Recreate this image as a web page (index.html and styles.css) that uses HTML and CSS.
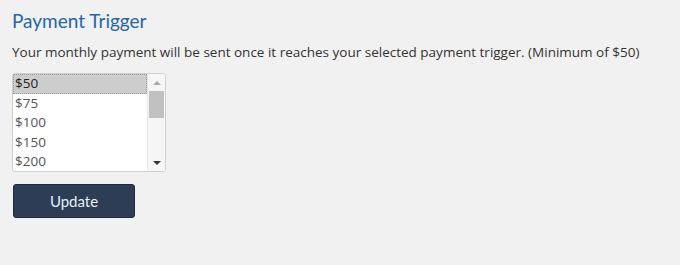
FILE: index.html
```html
<!DOCTYPE html>
<html>
<head>
<meta charset="utf-8">
<link rel="stylesheet" href="styles.css">
</head>
<body>
<div class="panel">
  <h2 class="title">Payment Trigger</h2>
  <p class="desc">Your monthly payment will be sent once it reaches your selected payment trigger. (Minimum of $50)</p>
  <div class="listbox">
    <div class="options">
      <div class="opt selected">$50</div>
      <div class="opt">$75</div>
      <div class="opt">$100</div>
      <div class="opt">$150</div>
      <div class="opt">$200</div>
    </div>
    <div class="scrollbar">
      <div class="arrow up"></div>
      <div class="track"><div class="thumb"></div></div>
      <div class="arrow down"></div>
    </div>
  </div>
  <button class="btn">Update</button>
</div>
</body>
</html>
```

FILE: styles.css
```css
html, body {
  margin: 0;
  padding: 0;
  background: #f1f1f1;
}
.panel {
  padding: 10px 12px;
  display: flex;
  flex-direction: column;
  align-items: flex-start;
}
.title {
  margin: 0;
  font-family: "Lato", "Noto Sans", sans-serif;
  font-weight: 400;
  font-size: 19px;
  line-height: 22px;
  color: #2566a8;
}
.desc {
  margin: 11px 0 0 0;
  font-family: "Open Sans", "Noto Sans", sans-serif;
  font-size: 13.5px;
  line-height: 18px;
  color: #333;
}
.listbox {
  margin-top: 12px;
  width: 152px;
  height: 97px;
  border: 1px solid #cfcfcf;
  border-radius: 3px;
  background: #fff;
  display: flex;
  overflow: hidden;
}
.options {
  flex: 1;
  display: flex;
  flex-direction: column;
}
.opt {
  height: 19.5px;
  line-height: 19.5px;
  padding-left: 2px;
  font-family: "Open Sans", "Noto Sans", sans-serif;
  font-size: 13.5px;
  color: #555;
  box-sizing: border-box;
}
.opt.selected {
  background: #cdcdcd;
  color: #222;
  outline: 1px dotted #999;
  outline-offset: -1px;
}
.scrollbar {
  width: 17px;
  background: #f6f6f6;
  border-left: 1px solid #e8e8e8;
  display: flex;
  flex-direction: column;
}
.arrow {
  height: 17px;
  display: flex;
  align-items: center;
  justify-content: center;
}
.arrow.up::before {
  content: "";
  border-left: 4px solid transparent;
  border-right: 4px solid transparent;
  border-bottom: 4px solid #a8a8a8;
}
.arrow.down::before {
  content: "";
  border-left: 4px solid transparent;
  border-right: 4px solid transparent;
  border-top: 4px solid #333;
}
.track {
  flex: 1;
  padding: 0 1px;
}
.thumb {
  height: 27px;
  background: #c1c1c1;
}
.btn {
  margin-top: 12px;
  margin-left: 1px;
  width: 122px;
  height: 34px;
  background: #2c3d55;
  border: 1px solid #1e2b3d;
  border-radius: 3px;
  color: #e8eef5;
  font-family: "Lato", "Noto Sans", sans-serif;
  font-size: 15px;
  padding: 0;
}
```
